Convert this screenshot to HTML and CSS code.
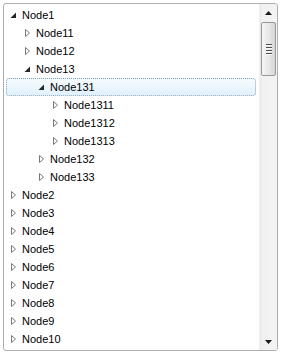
FILE: index.html
```html
<!DOCTYPE html>
<html>
<head>
<meta charset="utf-8">
<link rel="stylesheet" href="styles.css">
</head>
<body>
<div class="tree">
  <div class="content">
    <div class="row l0"><span class="tg"><svg width="7" height="7" viewBox="0 0 7 7"><path d="M6 0.5V6H0.5Z" class="exp"/></svg></span><span class="tx">Node1</span></div>
    <div class="row l1"><span class="tg"><svg width="7" height="10" viewBox="0 0 7 10"><path d="M1.5 1.5L5.5 5L1.5 8.5Z" class="col"/></svg></span><span class="tx">Node11</span></div>
    <div class="row l1"><span class="tg"><svg width="7" height="10" viewBox="0 0 7 10"><path d="M1.5 1.5L5.5 5L1.5 8.5Z" class="col"/></svg></span><span class="tx">Node12</span></div>
    <div class="row l1"><span class="tg"><svg width="7" height="7" viewBox="0 0 7 7"><path d="M6 0.5V6H0.5Z" class="exp"/></svg></span><span class="tx">Node13</span></div>
    <div class="row l2 sel"><span class="tg"><svg width="7" height="7" viewBox="0 0 7 7"><path d="M6 0.5V6H0.5Z" class="exp"/></svg></span><span class="tx">Node131</span></div>
    <div class="row l3"><span class="tg"><svg width="7" height="10" viewBox="0 0 7 10"><path d="M1.5 1.5L5.5 5L1.5 8.5Z" class="col"/></svg></span><span class="tx">Node1311</span></div>
    <div class="row l3"><span class="tg"><svg width="7" height="10" viewBox="0 0 7 10"><path d="M1.5 1.5L5.5 5L1.5 8.5Z" class="col"/></svg></span><span class="tx">Node1312</span></div>
    <div class="row l3"><span class="tg"><svg width="7" height="10" viewBox="0 0 7 10"><path d="M1.5 1.5L5.5 5L1.5 8.5Z" class="col"/></svg></span><span class="tx">Node1313</span></div>
    <div class="row l2"><span class="tg"><svg width="7" height="10" viewBox="0 0 7 10"><path d="M1.5 1.5L5.5 5L1.5 8.5Z" class="col"/></svg></span><span class="tx">Node132</span></div>
    <div class="row l2"><span class="tg"><svg width="7" height="10" viewBox="0 0 7 10"><path d="M1.5 1.5L5.5 5L1.5 8.5Z" class="col"/></svg></span><span class="tx">Node133</span></div>
    <div class="row l0"><span class="tg"><svg width="7" height="10" viewBox="0 0 7 10"><path d="M1.5 1.5L5.5 5L1.5 8.5Z" class="col"/></svg></span><span class="tx">Node2</span></div>
    <div class="row l0"><span class="tg"><svg width="7" height="10" viewBox="0 0 7 10"><path d="M1.5 1.5L5.5 5L1.5 8.5Z" class="col"/></svg></span><span class="tx">Node3</span></div>
    <div class="row l0"><span class="tg"><svg width="7" height="10" viewBox="0 0 7 10"><path d="M1.5 1.5L5.5 5L1.5 8.5Z" class="col"/></svg></span><span class="tx">Node4</span></div>
    <div class="row l0"><span class="tg"><svg width="7" height="10" viewBox="0 0 7 10"><path d="M1.5 1.5L5.5 5L1.5 8.5Z" class="col"/></svg></span><span class="tx">Node5</span></div>
    <div class="row l0"><span class="tg"><svg width="7" height="10" viewBox="0 0 7 10"><path d="M1.5 1.5L5.5 5L1.5 8.5Z" class="col"/></svg></span><span class="tx">Node6</span></div>
    <div class="row l0"><span class="tg"><svg width="7" height="10" viewBox="0 0 7 10"><path d="M1.5 1.5L5.5 5L1.5 8.5Z" class="col"/></svg></span><span class="tx">Node7</span></div>
    <div class="row l0"><span class="tg"><svg width="7" height="10" viewBox="0 0 7 10"><path d="M1.5 1.5L5.5 5L1.5 8.5Z" class="col"/></svg></span><span class="tx">Node8</span></div>
    <div class="row l0"><span class="tg"><svg width="7" height="10" viewBox="0 0 7 10"><path d="M1.5 1.5L5.5 5L1.5 8.5Z" class="col"/></svg></span><span class="tx">Node9</span></div>
    <div class="row l0"><span class="tg"><svg width="7" height="10" viewBox="0 0 7 10"><path d="M1.5 1.5L5.5 5L1.5 8.5Z" class="col"/></svg></span><span class="tx">Node10</span></div>
  </div>
  <div class="sbar">
    <div class="arrow"><svg width="7" height="4" viewBox="0 0 7 4"><path d="M3.5 0L7 4H0Z" fill="#1a1a1a"/></svg></div>
    <div class="track">
      <div class="thumb">
        <div class="grip"><i></i><i></i><i></i><i></i></div>
      </div>
    </div>
    <div class="arrow"><svg width="7" height="4" viewBox="0 0 7 4"><path d="M0 0H7L3.5 4Z" fill="#1a1a1a"/></svg></div>
  </div>
</div>
</body>
</html>
```
FILE: styles.css
```css
html, body {
  margin: 0;
  padding: 0;
  background: #fff;
}
.tree {
  margin: 3px;
  width: 275px;
  height: 348px;
  box-sizing: border-box;
  border: 1px solid #adadad;
  border-radius: 3px;
  display: flex;
  overflow: hidden;
  font-family: "Liberation Sans", Arial, sans-serif;
  font-size: 11px;
  color: #000;
}
.content {
  flex: 1;
  padding: 2px 0 0 2px;
  overflow: hidden;
}
.row {
  height: 18px;
  display: flex;
  align-items: center;
  box-sizing: border-box;
  width: 250px;
  border: 1px solid transparent;
  border-radius: 3px;
  white-space: nowrap;
}
.row.sel {
  border: 1px dotted #8aa2bd;
  background: linear-gradient(to bottom, #f6fbfe, #e0f1fc);
}
.tg {
  width: 12px;
  flex: none;
  display: flex;
  align-items: center;
}
.tx {
  line-height: 16px;
}
.l0 { padding-left: 3px; }
.l1 { padding-left: 17px; }
.l2 { padding-left: 31px; }
.l3 { padding-left: 45px; }
.exp {
  fill: #262626;
}
.col {
  fill: #fff;
  stroke: #7a7a7a;
  stroke-width: 1;
}
.sbar {
  width: 17px;
  flex: none;
  display: flex;
  flex-direction: column;
  background: linear-gradient(to right, #e3e3e3 0, #f0f0f0 1px, #f4f4f4 100%);
  border-left: 1px solid #f0f0f0;
}
.arrow {
  height: 17px;
  display: flex;
  align-items: center;
  justify-content: center;
}
.track {
  flex: 1;
  padding-top: 1px;
}
.thumb {
  margin: 0 1px;
  height: 54px;
  box-sizing: border-box;
  border: 1px solid #999;
  border-radius: 2px;
  background: linear-gradient(to right, #f4f4f4, #e8e8e8 50%, #d6d6d6);
  display: flex;
  align-items: center;
  justify-content: center;
}
.grip {
  display: flex;
  flex-direction: column;
  gap: 1px;
}
.grip i {
  display: block;
  width: 6px;
  height: 1px;
  background: #505050;
  border-bottom: 1px solid #fafafa;
}
```
